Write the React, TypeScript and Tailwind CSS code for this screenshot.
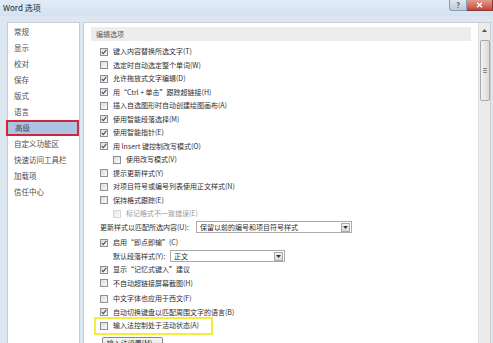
import React from "react";

const FONT = "font-['Noto_Sans_CJK_SC','Noto_Sans',sans-serif]";

const navItems = ["常规", "显示", "校对", "保存", "版式", "语言", "高级", "自定义功能区", "快速访问工具栏", "加载项", "信任中心"];

function Box({ checked, disabled }: { checked?: boolean; disabled?: boolean }) {
  return (
    <span
      className={`w-[8px] h-[8px] shrink-0 border flex items-center justify-center bg-gradient-to-br from-[#dcdcdc] to-[#fbfbfb] ${
        disabled ? "border-[#c4c4c4] opacity-70" : "border-[#8e8f8f]"
      }`}
    >
      {checked && (
        <svg width="6" height="6" viewBox="0 0 6 6">
          <path d="M0.8 3.1 L2.3 4.7 L5.3 0.9" fill="none" stroke="#3b4f6e" strokeWidth="1.1" />
        </svg>
      )}
    </span>
  );
}

function Row({
  label,
  checked,
  indent,
  disabled,
  className = "",
}: {
  label: string;
  checked?: boolean;
  indent?: boolean;
  disabled?: boolean;
  className?: string;
}) {
  return (
    <div className={`h-[13.5px] flex items-center gap-[5px] ${indent ? "pl-[13px]" : ""} ${className}`}>
      <Box checked={checked} disabled={disabled} />
      <span className={`whitespace-nowrap leading-none ${disabled ? "text-[#9b9b9b]" : "text-[#2e2e2e]"}`}>{label}</span>
    </div>
  );
}

function Select({ value, width }: { value: string; width: string }) {
  return (
    <div className={`${width} h-[12px] border border-[#ababab] bg-white flex items-center justify-between pl-[3px] pr-[1px]`}>
      <span className="whitespace-nowrap leading-none text-[#2e2e2e]">{value}</span>
      <span className="w-[9px] h-[9px] border border-[#a8a8a8] bg-gradient-to-b from-[#f4f4f4] to-[#d9d9d9] flex items-center justify-center">
        <svg width="5" height="3" viewBox="0 0 5 3">
          <path d="M0 0 H5 L2.5 3 Z" fill="#333" />
        </svg>
      </span>
    </div>
  );
}

export default function App() {
  return (
    <div className={`w-[493px] h-[343px] overflow-hidden bg-[#dde7f2] flex flex-col ${FONT}`}>
      {/* Title bar */}
      <div className="h-[16px] shrink-0 flex items-start justify-between bg-gradient-to-b from-[#e2ecf7] to-[#d3e2f2]">
        <span className="text-[8px] leading-none text-[#1e1e1e] pl-[3px] pt-[4px] whitespace-nowrap">Word 选项</span>
        <div className="flex h-[11px] mr-0">
          <div className="w-[18px] h-full border border-[#8f9fb3] border-t-0 rounded-bl-[3px] bg-gradient-to-b from-[#dfe8f1] to-[#b9c9da] flex items-center justify-center">
            <span className="text-[7px] leading-none text-[#3e4e62] font-bold">?</span>
          </div>
          <div className="w-[26px] h-full border border-[#8a3a33] border-t-0 border-l-0 bg-gradient-to-b from-[#e29a8f] to-[#c4443a] flex items-center justify-center">
            <svg width="7" height="6" viewBox="0 0 7 6">
              <path d="M1 0.8 L6 5.2 M6 0.8 L1 5.2" stroke="#fff" strokeWidth="1.5" />
            </svg>
          </div>
        </div>
      </div>

      {/* Body */}
      <div className="flex-1 flex gap-[3px] pt-[6px] pl-[7px] pr-[2px] min-h-0">
        {/* Navigation */}
        <div className="w-[73px] shrink-0 bg-white border border-[#c9cdd3] border-b-0 pt-[1px] text-[7.5px] text-[#4e4e4e]">
          {navItems.map((item) => (
            <div
              key={item}
              className={`h-[16px] flex items-center whitespace-nowrap leading-none ${
                item === "高级"
                  ? "bg-[#adc5e4] border-2 border-[#d0283a] -ml-[2px] pl-[7px]"
                  : "pl-[6px]"
              }`}
            >
              {item}
            </div>
          ))}
        </div>

        {/* Options */}
        <div className="flex-1 bg-white border border-[#c9cdd3] border-b-0 flex min-w-0">
          <div className="flex-1 min-w-0 text-[7px] pt-[4px] pl-[7px] pr-[7px]">
            <div className="h-[14px] bg-[#ededed] flex items-center pl-[5px] text-[#5b5b5b] leading-none">编辑选项</div>

            <div className="pl-[9px] pt-[4px]">
              <Row checked label="键入内容替换所选文字(T)" />
              <Row label="选定时自动选定整个单词(W)" />
              <Row checked label="允许拖放式文字编辑(D)" />
              <Row checked label="用“Ctrl + 单击”跟踪超链接(H)" />
              <Row label="插入自选图形时自动创建绘图画布(A)" />
              <Row checked label="使用智能段落选择(M)" />
              <Row checked label="使用智能指针(E)" />
              <Row checked label="用 Insert 键控制改写模式(O)" />
              <Row indent label="使用改写模式(V)" />
              <Row label="提示更新样式(Y)" />
              <Row label="对项目符号或编号列表使用正文样式(N)" />
              <Row label="保持格式跟踪(E)" />
              <Row indent disabled label="标记格式不一致错误(E)" />

              <div className="h-[13.5px] flex items-center">
                <span className="w-[96px] whitespace-nowrap leading-none text-[#2e2e2e]">更新样式以匹配所选内容(U):</span>
                <Select value="保留以前的编号和项目符号样式" width="w-[156px]" />
              </div>

              <Row checked label="启用“即点即输”(C)" className="mt-[2px]" />
              <div className="h-[13.5px] flex items-center pl-[13px]">
                <span className="w-[57px] whitespace-nowrap leading-none text-[#2e2e2e]">默认段落样式(Y):</span>
                <Select value="正文" width="w-[115px]" />
              </div>
              <Row checked label="显示“记忆式键入”建议" />
              <Row label="不自动超链接屏幕截图(H)" />

              <Row label="中文字体也应用于西文(F)" className="mt-[2px]" />
              <Row checked label="自动切换键盘以匹配周围文字的语言(B)" />
              <div className="relative">
                <Row label="输入法控制处于活动状态(A)" />
                <div className="absolute -left-[6px] -top-[2px] w-[119px] h-[18px] border-2 border-[#f1ee3e]" />
              </div>

              <div className="mt-[4px] ml-[2px] w-[61px] h-[14px] border border-[#8a8a8a] rounded-[2px] bg-gradient-to-b from-[#f6f6f6] to-[#dedede] flex items-start pt-[2px] justify-center">
                <span className="whitespace-nowrap leading-none text-[#2e2e2e]">输入法设置(M)...</span>
              </div>
            </div>
          </div>

          {/* Scrollbar */}
          <div className="w-[12px] shrink-0 bg-[#ebebeb] border-l border-[#e0e0e0] flex flex-col items-center">
            <div className="h-[14px] w-full flex items-center justify-center">
              <svg width="5" height="3" viewBox="0 0 5 3">
                <path d="M0 3 H5 L2.5 0 Z" fill="#555" />
              </svg>
            </div>
            <div className="mt-[3px] w-[10px] h-[61px] border border-[#a9a9a9] rounded-[2px] bg-gradient-to-r from-[#f3f3f3] to-[#dadada] flex flex-col items-center justify-center gap-[1px]">
              <span className="w-[4px] h-px bg-[#8a8a8a]" />
              <span className="w-[4px] h-px bg-[#8a8a8a]" />
              <span className="w-[4px] h-px bg-[#8a8a8a]" />
            </div>
          </div>
        </div>
      </div>
    </div>
  );
}
